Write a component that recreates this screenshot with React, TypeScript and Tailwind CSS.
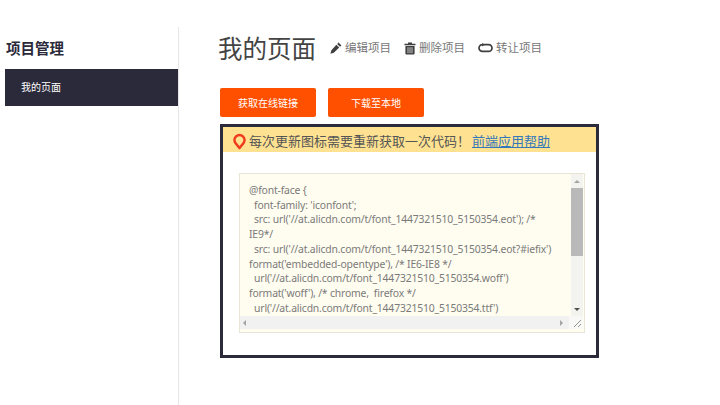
import React from 'react';

const cjk = 'font-["Noto_Sans_CJK_SC","Noto_Sans",sans-serif]';

const codeLines = [
    "@font-face {",
    "\u00a0\u00a0font-family: 'iconfont';",
    "\u00a0\u00a0src: url('//at.alicdn.com/t/font_1447321510_5150354.eot'); /*",
    "IE9*/",
    "\u00a0\u00a0src: url('//at.alicdn.com/t/font_1447321510_5150354.eot?#iefix')",
    "format('embedded-opentype'), /* IE6-IE8 */",
    "\u00a0\u00a0url('//at.alicdn.com/t/font_1447321510_5150354.woff')",
    "format('woff'), /* chrome,\u00a0\u00a0firefox */",
    "\u00a0\u00a0url('//at.alicdn.com/t/font_1447321510_5150354.ttf')",
];

const Action = ({ icon, label }: { icon: React.ReactNode; label: string }) => (
    <span className="flex items-center gap-[3px] text-[11.5px] text-[#777]">
        {icon}
        {label}
    </span>
);

export default function App() {
    return (
        <div className={`flex h-[405px] w-[720px] overflow-hidden bg-white pt-[27px] ${cjk}`}>
            {/* Sidebar */}
            <div className="h-full w-[179px] shrink-0 border-r border-[#e6e6e6] pl-[5px]">
                <h2 className="mt-[11px] h-[20px] pl-[1px] text-[14.5px] leading-[20px] font-bold text-[#2b2a3a]">项目管理</h2>
                <div className="mt-[11px] flex h-[37px] items-center bg-[#2b2a3a] pb-[2px] pl-[16px] text-[10px] text-white">我的页面</div>
            </div>

            {/* Main */}
            <div className="pl-[40px]">
                <div className="flex h-[46px] items-center">
                    <h1 className="-ml-[1px] pb-[5px] text-[24.5px] leading-[41px] font-normal text-[#444]">我的页面</h1>
                    <div className="ml-[14px] flex items-center gap-[13px] pb-[4px]">
                        <Action
                            icon={
                                <svg width="12" height="12" viewBox="0 0 12 12">
                                    <path d="M8.6 0.6l2.8 2.8-1.4 1.4-2.8-2.8zM6.4 2.8l2.8 2.8-5.4 5.2-3.4 1 1-3.6z" fill="#3f3f3f" />
                                </svg>
                            }
                            label="编辑项目"
                        />
                        <Action
                            icon={
                                <svg width="12" height="13" viewBox="0 0 12 13">
                                    <path d="M4 0.5h4v1.2h3.5v1.5H0.5V1.7H4zM1.4 4h9.2v7.6a1 1 0 0 1-1 1H2.4a1 1 0 0 1-1-1z" fill="#3f3f3f" />
                                    <path d="M4 5.2v6M6 5.2v6M8 5.2v6" stroke="#fff" strokeWidth="0.7" />
                                </svg>
                            }
                            label="删除项目"
                        />
                        <Action
                            icon={
                                <svg width="15" height="10" viewBox="0 0 15 10" fill="none">
                                    <path d="M6 1.6H4.4a3.4 3.4 0 0 0 0 6.8h6.2a3.4 3.4 0 0 0 0-6.8H4" stroke="#3f3f3f" strokeWidth="1.7" />
                                    <path d="M4.2 0v3.4L6.6 1.7z" fill="#3f3f3f" />
                                </svg>
                            }
                            label="转让项目"
                        />
                    </div>
                </div>

                <div className="mt-[15px] ml-[1px] flex gap-[12px]">
                    <button className="h-[29px] w-[96px] rounded-[2px] bg-[#ff5000] text-[10px] text-white">获取在线链接</button>
                    <button className="h-[29px] w-[96px] rounded-[2px] bg-[#ff5000] text-[10px] text-white">下载至本地</button>
                </div>

                {/* Dialog */}
                <div className="mt-[7px] ml-[1px] h-[234px] w-[379px] border-[3px] border-[#2b2a3a] bg-white">
                    <div className="flex h-[25px] items-center bg-[#ffe291] pl-[10px] text-[13px] text-[#555]">
                        <svg width="13" height="17" viewBox="0 0 13 17" fill="none" className="mt-[3px] mr-[3px]">
                            <path d="M6.5 15L2.6 10.2a5 5 0 1 1 7.8 0z" stroke="#f03c1e" strokeWidth="2.6" strokeLinejoin="round" />
                        </svg>
                        <span className="mt-[3px]">每次更新图标需要重新获取一次代码！</span>
                        <span className="mt-[3px] ml-[2px] text-[#3377bb] underline">前端应用帮助</span>
                    </div>

                    <div className="mt-[21px] ml-[16px] flex h-[160px] w-[346px] flex-col border border-[#e8e5d6] bg-[#fffdf0] pr-[1px] pb-[3px]">
                        <div className="flex min-h-0 flex-1">
                            <div className='flex-1 overflow-hidden pt-[9px] pl-[9px] font-["Noto_Sans",sans-serif] text-[10.4px] leading-[14.7px] tracking-[-0.18px] text-[#7a7a7a]'>
                                {codeLines.map((line, i) => (
                                    <div key={i} className="whitespace-nowrap">{line}</div>
                                ))}
                            </div>
                            {/* vertical scrollbar */}
                            <div className="flex w-[12px] shrink-0 flex-col bg-[#f3f3f0]">
                                <div className="flex h-[14px] items-center justify-center">
                                    <div className="h-0 w-0 border-x-[3.5px] border-b-[3.5px] border-x-transparent border-b-[#a3a3a3]" />
                                </div>
                                <div className="h-[68px] bg-[#b9b9b9]" />
                                <div className="flex-1" />
                                <div className="flex h-[13px] items-center justify-center">
                                    <div className="h-0 w-0 border-x-[3.5px] border-t-[3.5px] border-x-transparent border-t-[#505050]" />
                                </div>
                            </div>
                        </div>
                        {/* horizontal scrollbar */}
                        <div className="flex h-[13px] shrink-0">
                            <div className="flex flex-1 items-center justify-between bg-[#f1f1f1] px-[3px]">
                                <div className="h-0 w-0 border-y-[3.5px] border-r-[3.5px] border-y-transparent border-r-[#a3a3a3]" />
                                <div className="mr-[3px] h-0 w-0 border-y-[3.5px] border-l-[3.5px] border-y-transparent border-l-[#a3a3a3]" />
                            </div>
                            <div className="flex w-[14px] items-end justify-end bg-[#f8f8f6] p-[1px]">
                                <svg width="9" height="9" viewBox="0 0 9 9">
                                    <path d="M1 8l7-7M5 8l3-3" stroke="#888" strokeWidth="0.9" />
                                </svg>
                            </div>
                        </div>
                    </div>
                </div>
            </div>
        </div>
    );
}
